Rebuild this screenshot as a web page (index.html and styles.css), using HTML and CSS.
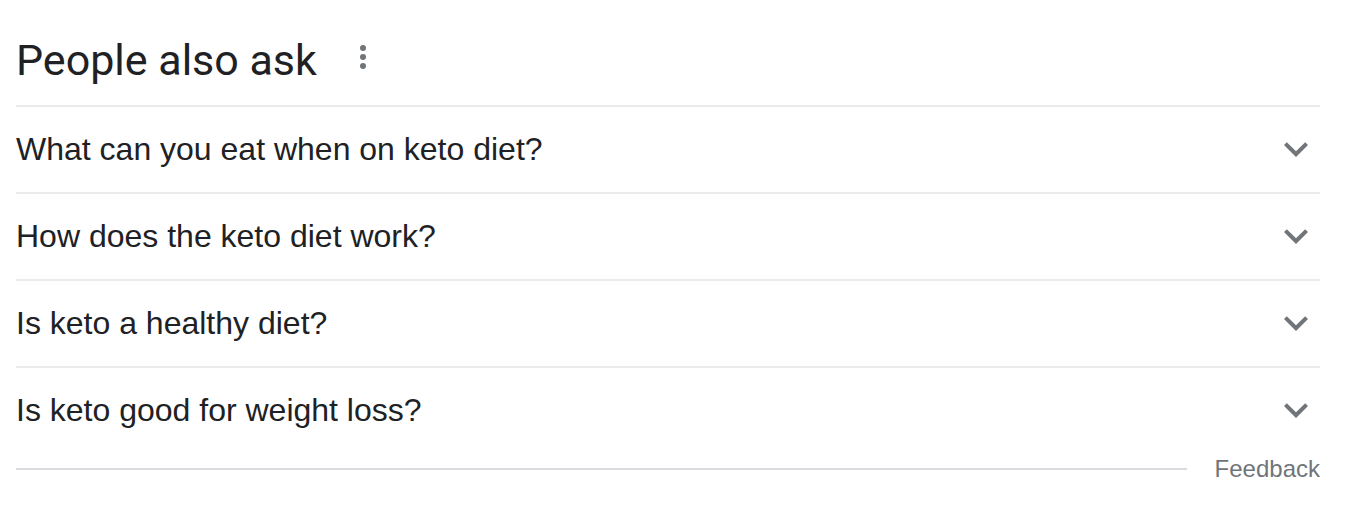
FILE: index.html
```html
<!DOCTYPE html>
<html lang="en">
<head>
<meta charset="utf-8">
<title>People also ask</title>
<link rel="stylesheet" href="styles.css">
</head>
<body>
<div class="paa">
  <div class="paa-header">
    <h2 class="paa-title">People also ask</h2>
    <svg class="paa-more" viewBox="0 0 12 28" width="12" height="28" aria-hidden="true">
      <circle cx="6" cy="5" r="3"/>
      <circle cx="6" cy="14" r="3"/>
      <circle cx="6" cy="23" r="3"/>
    </svg>
  </div>
  <div class="paa-list">
    <div class="paa-row">
      <span class="paa-q">What can you eat when on keto diet?</span>
      <svg class="paa-chev" viewBox="0 0 24 24" width="48" height="48" aria-hidden="true"><path d="M16.59 8.59L12 13.17 7.41 8.59 6 10l6 6 6-6z"/></svg>
    </div>
    <div class="paa-row">
      <span class="paa-q">How does the keto diet work?</span>
      <svg class="paa-chev" viewBox="0 0 24 24" width="48" height="48" aria-hidden="true"><path d="M16.59 8.59L12 13.17 7.41 8.59 6 10l6 6 6-6z"/></svg>
    </div>
    <div class="paa-row">
      <span class="paa-q">Is keto a healthy diet?</span>
      <svg class="paa-chev" viewBox="0 0 24 24" width="48" height="48" aria-hidden="true"><path d="M16.59 8.59L12 13.17 7.41 8.59 6 10l6 6 6-6z"/></svg>
    </div>
    <div class="paa-row">
      <span class="paa-q">Is keto good for weight loss?</span>
      <svg class="paa-chev" viewBox="0 0 24 24" width="48" height="48" aria-hidden="true"><path d="M16.59 8.59L12 13.17 7.41 8.59 6 10l6 6 6-6z"/></svg>
    </div>
  </div>
  <div class="paa-footer">
    <div class="paa-rule"></div>
    <span class="paa-feedback">Feedback</span>
  </div>
</div>
</body>
</html>
```

FILE: styles.css
```css
html, body {
  margin: 0;
  padding: 0;
  background: #ffffff;
}

.paa {
  width: 1304px;
  margin-left: 16px;
  color: #202124;
}

.paa-header {
  display: flex;
  align-items: center;
  padding: 32px 0 17px;
  height: 56px;
}

.paa-title {
  margin: 0;
  font-family: Roboto, "Open Sans", Arial, sans-serif;
  font-weight: 400;
  font-size: 43px;
  line-height: 56px;
  color: #202124;
}

.paa-more {
  fill: #70757a;
  margin-left: 40px;
  margin-top: -6px;
}

.paa-row {
  display: flex;
  align-items: center;
  justify-content: space-between;
  border-top: 2px solid #ebebeb;
  padding: 18px 0 19px;
  height: 48px;
}

.paa-q {
  font-family: "Liberation Sans", Arial, sans-serif;
  font-size: 32px;
  line-height: 48px;
  color: #202124;
}

.paa-chev {
  fill: #70757a;
}

.paa-footer {
  display: flex;
  align-items: center;
  height: 32px;
}

.paa-rule {
  flex: 1;
  height: 2px;
  background: #dadce0;
  margin-right: 28px;
}

.paa-feedback {
  font-family: "Liberation Sans", Arial, sans-serif;
  font-size: 24px;
  line-height: 32px;
  color: #70757a;
}
```
